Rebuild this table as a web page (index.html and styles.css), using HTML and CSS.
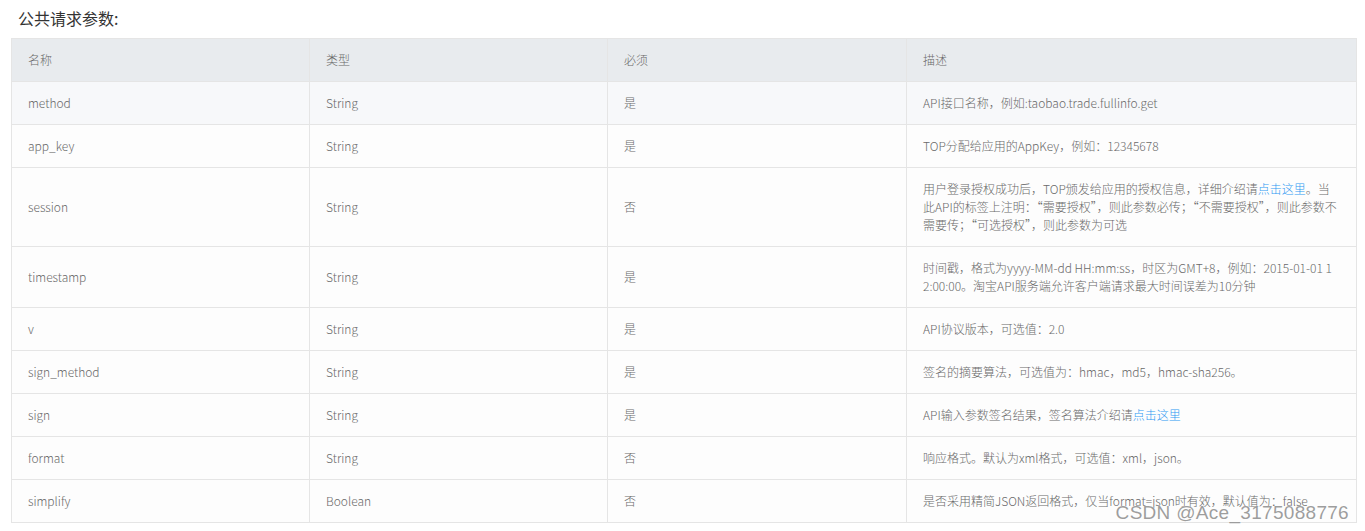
FILE: index.html
```html
<!DOCTYPE html>
<html lang="zh-CN">
<head>
<meta charset="utf-8">
<title>公共请求参数</title>
<link rel="stylesheet" href="styles.css">
</head>
<body>
<div class="page">
  <h3 class="title">公共请求参数:</h3>
  <table class="params">
    <colgroup>
      <col class="c-name">
      <col class="c-type">
      <col class="c-req">
      <col class="c-desc">
    </colgroup>
    <thead>
      <tr><th>名称</th><th>类型</th><th>必须</th><th>描述</th></tr>
    </thead>
    <tbody>
      <tr class="hover"><td>method</td><td>String</td><td>是</td><td class="desc">API接口名称，例如:taobao.trade.fullinfo.get</td></tr>
      <tr><td>app_key</td><td>String</td><td>是</td><td class="desc">TOP分配给应用的AppKey，例如：12345678</td></tr>
      <tr><td>session</td><td>String</td><td>否</td><td class="desc">用户登录授权成功后，TOP颁发给应用的授权信息，详细介绍请<a href="#">点击这里</a>。当此API的标签上注明：“需要授权”，则此参数必传；“不需要授权”，则此参数不需要传；“可选授权”，则此参数为可选</td></tr>
      <tr><td>timestamp</td><td>String</td><td>是</td><td class="desc">时间戳，格式为yyyy-MM-dd HH:mm:ss，时区为GMT+8，例如：2015-01-01 12:00:00。淘宝API服务端允许客户端请求最大时间误差为10分钟</td></tr>
      <tr><td>v</td><td>String</td><td>是</td><td class="desc">API协议版本，可选值：2.0</td></tr>
      <tr><td>sign_method</td><td>String</td><td>是</td><td class="desc">签名的摘要算法，可选值为：hmac，md5，hmac-sha256。</td></tr>
      <tr><td>sign</td><td>String</td><td>是</td><td class="desc">API输入参数签名结果，签名算法介绍请<a href="#">点击这里</a></td></tr>
      <tr><td>format</td><td>String</td><td>否</td><td class="desc">响应格式。默认为xml格式，可选值：xml，json。</td></tr>
      <tr><td>simplify</td><td>Boolean</td><td>否</td><td class="desc">是否采用精简JSON返回格式，仅当format=json时有效，默认值为：false</td></tr>
    </tbody>
  </table>
  <div class="watermark">CSDN @Ace_3175088776</div>
</div>
</body>
</html>
```

FILE: styles.css
```css
html, body {
  margin: 0;
  padding: 0;
  background: #ffffff;
}

body {
  font-family: "Noto Sans CJK SC", "Microsoft YaHei", sans-serif;
  color: #666666;
}

.page {
  position: relative;
  padding: 0 9px 0 11px;
  height: 531px;
  overflow: hidden;
}

.title {
  margin: 0;
  padding: 7px 0 0 7px;
  height: 38px;
  box-sizing: border-box;
  font-size: 16px;
  font-weight: normal;
  line-height: 22px;
  color: #333333;
}

.params {
  width: 1345px;
  border-collapse: collapse;
  table-layout: fixed;
  font-size: 12px;
  line-height: 18px;
}

.c-name { width: 298px; }
.c-type { width: 298px; }
.c-req { width: 299px; }
.c-desc { width: 450px; }

.params th,
.params td {
  border: 1px solid #e5e5e5;
  padding: 12px 16px;
  text-align: left;
  vertical-align: middle;
  font-weight: 300;
  color: #6a6a6a;
}

.params td.desc {
  word-break: break-all;
}

.params thead th {
  background: #e8ebee;
}

.params tbody td {
  background: #fdfdfd;
}

.params tbody tr.hover td {
  background: #f7f8fa;
}

.params a {
  color: #2f9af2;
  text-decoration: none;
}

.watermark {
  position: absolute;
  right: 16px;
  bottom: 7px;
  font-family: "Liberation Sans", Arial, sans-serif;
  font-size: 19px;
  line-height: 22px;
  color: rgba(140, 140, 140, 0.85);
  text-shadow: 0 0 1px rgba(255, 255, 255, 0.9);
  letter-spacing: 0.3px;
}
```
